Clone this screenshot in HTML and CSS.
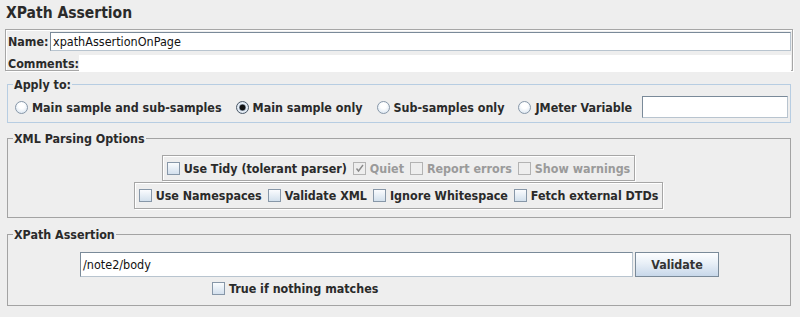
FILE: index.html
```html
<!DOCTYPE html>
<html lang="en">

<head>
    <meta charset="UTF-8">
    <title>XPath Assertion</title>
    <link rel="stylesheet" href="styles.css">
</head>

<body>
    <div class="title">XPath Assertion</div>

    <div class="names">
        <div class="row">
            <label>Name:</label>
            <div class="field name-field">xpathAssertionOnPage</div>
        </div>
        <div class="row comments">
            <label>Comments:</label>
            <div class="area"></div>
        </div>
    </div>

    <fieldset class="group apply">
        <legend>Apply to:</legend>
        <div class="radios">
            <span class="opt"><i class="radio"></i>Main sample and sub-samples</span>
            <span class="opt"><i class="radio on"></i>Main sample only</span>
            <span class="opt"><i class="radio"></i>Sub-samples only</span>
            <span class="opt"><i class="radio"></i>JMeter Variable</span>
            <div class="field var-field"></div>
        </div>
    </fieldset>

    <fieldset class="group parsing">
        <legend>XML Parsing Options</legend>
        <div class="line tidy">
            <span class="opt"><i class="check"></i>Use Tidy (tolerant parser)</span>
            <span class="opt off"><i class="check"><svg width="9" height="9" viewBox="0 0 9 9"><path d="M1.5 4.5 L3.5 7 L8 1" fill="none" stroke="#8a8a8a" stroke-width="1.4"/></svg></i>Quiet</span>
            <span class="opt off"><i class="check"></i>Report errors</span>
            <span class="opt off"><i class="check"></i>Show warnings</span>
        </div>
        <div class="line">
            <span class="opt"><i class="check"></i>Use Namespaces</span>
            <span class="opt"><i class="check"></i>Validate XML</span>
            <span class="opt"><i class="check"></i>Ignore Whitespace</span>
            <span class="opt"><i class="check"></i>Fetch external DTDs</span>
        </div>
    </fieldset>

    <fieldset class="group xpath">
        <legend>XPath Assertion</legend>
        <div class="query">
            <div class="field query-field">/note2/body</div>
            <button>Validate</button>
        </div>
        <div class="negate">
            <span class="opt"><i class="check"></i>True if nothing matches</span>
        </div>
    </fieldset>
</body>

</html>
```

FILE: styles.css
```css
* {
    margin: 0;
    padding: 0;
    box-sizing: border-box;
}

body {
    width: 800px;
    height: 317px;
    overflow: hidden;
    background: #eeeeee;
    color: #2a2a2a;
    font: bold 12.4px/15px "DejaVu Sans Condensed", "DejaVu Sans", sans-serif;
}

.title {
    height: 29px;
    padding: 4px 0 0 6px;
    font-size: 15.5px;
    line-height: 19px;
}

.names {
    margin: 0 7px 0 5px;
    padding: 1px 1px 0 1px;
    height: 42px;
    border: 1px solid #a6a6a6;
    box-shadow: inset 1px 1px 0 #fff, 1px 1px 0 #fff;
}

.row {
    display: flex;
    align-items: center;
    height: 20px;
}

.row label {
    padding-left: 1px;
    width: 43px;
}

.comments {
    margin-top: 4px;
    height: 16px;
}

.comments label {
    width: 72px;
}

.field {
    background: #fff;
    border: 1px solid #7a8a99;
    border-right-color: #b8c4cf;
    border-bottom-color: #b8c4cf;
    font-weight: normal;
    font-size: 12.5px;
    color: #111;
    padding-left: 2px;
}

.name-field {
    flex: 1;
    height: 19px;
    line-height: 17px;
}

.area {
    flex: 1;
    height: 16px;
    background: #fff;
}

.group {
    margin: 0 9px 0 7px;
    padding: 0 6px 0 5px;
    border: 1px solid #a3a3a3;
}

.group legend {
    padding: 0 1px;
    line-height: 15px;
}

.apply {
    margin-top: 6px;
    height: 46px;
    padding-right: 1px;
    border-color: #b7cde2;
}

.radios {
    display: flex;
    align-items: center;
    height: 24px;
    margin-top: 3px;
}

.opt {
    display: flex;
    align-items: center;
    white-space: nowrap;
    margin-right: 12px;
}

.radio {
    width: 13px;
    height: 13px;
    margin: 0 4px 0 2px;
    border: 1px solid #8797a8;
    border-radius: 50%;
    background: radial-gradient(circle at 50% 35%, #fff 30%, #d2e0ee 100%);
}

.radio.on {
    border-color: #4b5866;
    background: radial-gradient(circle, #111 0 2.6px, #8a97a6 3.2px, #e7eef6 4px, #c9d7e6 100%);
}

.var-field {
    flex: 1;
    height: 22px;
    margin-left: -2px;
    margin-right: 1px;
}

.parsing {
    margin-top: 8px;
    height: 87px;
    display: flex;
    flex-direction: column;
    align-items: center;
}

.line {
    display: flex;
    align-items: center;
    height: 27px;
    padding: 0 4px;
    border: 1px solid #a6a6a6;
    box-shadow: inset 1px 1px 0 #fff, 1px 1px 0 #fff;
}

.line .opt {
    margin-right: 6px;
}

.line .opt:last-child {
    margin-right: 0;
}

.tidy {
    margin-top: 9px;
    height: 26px;
    margin-bottom: 1px;
}

.check {
    width: 13px;
    height: 13px;
    margin-right: 4px;
    border: 1px solid #8797a8;
    background: linear-gradient(#fafcfe, #d3e0ed);
    display: flex;
    align-items: center;
    justify-content: center;
}

.off {
    color: #9a9a9a;
}

.off .check {
    border-color: #b3b3b3;
    background: #eeeeee;
}

.xpath {
    margin-top: 9px;
    height: 79px;
}

.query {
    display: flex;
    justify-content: center;
    margin-top: 10px;
    margin-left: 2px;
}

.query-field {
    width: 553px;
    height: 25px;
    line-height: 23px;
}

button {
    width: 84px;
    height: 25px;
    margin-left: 2px;
    border: 1px solid #7a8a99;
    background: linear-gradient(#fdfeff, #e8eff7 45%, #c8d8ea);
    font: inherit;
    color: #333;
}

.negate {
    display: flex;
    margin: 4px 0 0 199px;
}
```
